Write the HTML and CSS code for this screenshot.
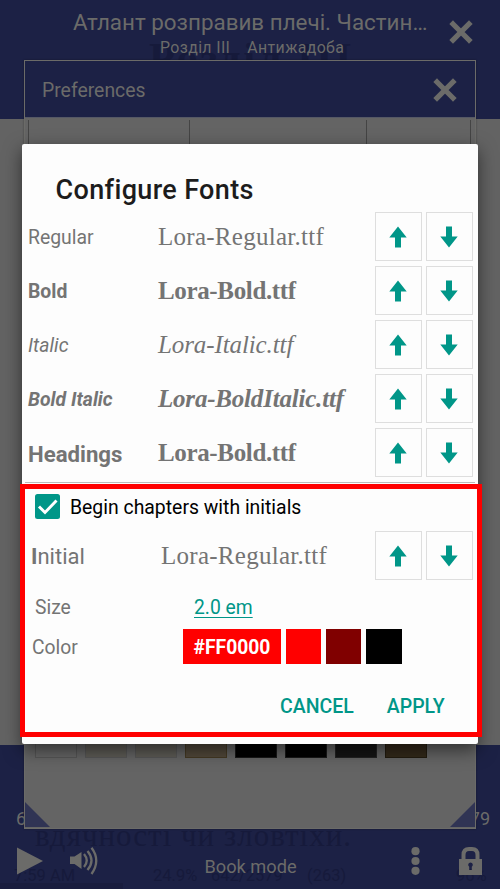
FILE: index.html
```html
<!DOCTYPE html>
<html lang="uk">
<head>
<meta charset="utf-8">
<title>Configure Fonts</title>
<link rel="stylesheet" href="styles.css">
</head>
<body>
<svg class="defs" width="0" height="0" aria-hidden="true">
  <symbol id="up" viewBox="0 0 18 22"><path d="M9 0.5 17.7 11.5H12V21.5H6V11.5H.3Z"/></symbol>
  <symbol id="down" viewBox="0 0 18 22"><path d="M9 21.5 17.7 10.5H12V.5H6V10.5H.3Z"/></symbol>
  <symbol id="close" viewBox="0 0 24 24"><path d="M4 4 20 20M20 4 4 20" fill="none" stroke="currentColor" stroke-width="5.2" stroke-linecap="square"/></symbol>
</svg>
<div class="screen">
  <header class="reader-bar">
    <div class="ghost ghost-title">Розділ III</div>
    <div class="titles">
      <div class="book"><span>Атлант розправив плечі. Частин…</span></div>
      <div class="chapter"><span>Розділ III</span><span>Антижадоба</span></div>
    </div>
    <svg class="close"><use href="#close"/></svg>
  </header>
  <main class="page"></main>
  <footer class="controls">
    <div class="progress"><span>6</span><span>79</span></div>
    <div class="ghost ghost-line">вдячності чи зловтіхи.</div>
    <div class="ghost ghost-status"><span>7:59 AM</span><span>24.9%</span><span>642/2579</span><span>(263)</span><span>96%</span></div>
    <div class="ghost-track"></div>
    <div class="toolbar">
      <svg class="play" viewBox="0 0 26 28"><path d="M0 .5 26 14 0 27.5Z"/></svg>
      <svg class="speaker" viewBox="0 0 28 28"><path d="M0 9.500H4.500L11.500 5V22L4.500 17H0Z"/><path d="M14 7Q19.500 13.500 14 20M17.500 4Q25.500 13.500 17.500 23M21.500 .800Q31 13.500 21.500 27" fill="none" stroke="currentColor" stroke-width="2.3"/></svg>
      <span class="mode">Book mode</span>
      <svg class="dots" viewBox="0 0 9 28"><circle cx="4.5" cy="4.2" r="4.1"/><circle cx="4.5" cy="14" r="4.1"/><circle cx="4.5" cy="23.8" r="4.1"/></svg>
      <svg class="lock" viewBox="0 0 23 28"><path d="M4.500 13V8Q4.500 2 10 2H13Q18.500 2 18.500 8V13" fill="none" stroke="currentColor" stroke-width="4"/><path fill-rule="evenodd" d="M0 12H23V28H0ZM11.500 15.500a2.300 2.300 0 0 0-1.300 4.200V23h2.600v-3.300a2.300 2.300 0 0 0-1.300-4.200Z"/></svg>
    </div>
  </footer>

  <section class="prefs">
    <div class="prefs-head"><span>Preferences</span><svg class="close"><use href="#close"/></svg></div>
    <div class="prefs-tabs"><i></i><i></i><i></i></div>
    <div class="themes"><i></i><i class="cream"></i><i class="cream"></i><i class="paper"></i><i class="black"></i><i class="black"></i><i class="dark"></i><i class="brown"></i></div>
    <div class="corners"><i></i><i></i></div>
  </section>

  <section class="dialog">
    <h1><span>Configure Fonts</span></h1>
    <div class="row"><span class="label l-regular">Regular</span><span class="file f-regular">Lora-Regular.ttf</span><button><svg><use href="#up"/></svg></button><button><svg><use href="#down"/></svg></button></div>
    <div class="row"><span class="label l-bold">Bold</span><span class="file f-bold">Lora-Bold.ttf</span><button><svg><use href="#up"/></svg></button><button><svg><use href="#down"/></svg></button></div>
    <div class="row"><span class="label l-italic">Italic</span><span class="file f-italic">Lora-Italic.ttf</span><button><svg><use href="#up"/></svg></button><button><svg><use href="#down"/></svg></button></div>
    <div class="row"><span class="label l-bolditalic">Bold Italic</span><span class="file f-bolditalic">Lora-BoldItalic.ttf</span><button><svg><use href="#up"/></svg></button><button><svg><use href="#down"/></svg></button></div>
    <div class="row"><span class="label l-headings">Headings</span><span class="file f-bold">Lora-Bold.ttf</span><button><svg><use href="#up"/></svg></button><button><svg><use href="#down"/></svg></button></div>
    <div class="initials">
      <div class="check"><svg viewBox="0 0 25 25"><rect width="25" height="25" rx="2.500"/><path d="M4 12.500 10 18.500 21.500 6.500" fill="none" stroke="#fff" stroke-width="2.900"/></svg><span>Begin chapters with initials</span></div>
      <div class="row initial"><span class="label l-initial"><b>I</b>nitial</span><span class="file f-regular">Lora-Regular.ttf</span><button><svg><use href="#up"/></svg></button><button><svg><use href="#down"/></svg></button></div>
      <div class="size"><span>Size</span><a>2.0 em</a></div>
      <div class="color"><span>Color</span><div class="swatches"><b>#FF0000</b><i></i><i class="maroon"></i><i class="black"></i></div></div>
      <div class="actions"><span class="cancel">CANCEL</span><span class="apply">APPLY</span></div>
    </div>
  </section>
  <div class="highlight"></div>
</div>
</body>
</html>
```
FILE: styles.css
```css
* { box-sizing: border-box; }
body { margin: 0; font-family: Roboto, sans-serif; }
.defs { position: absolute; }
svg { display: block; fill: currentColor; }
.screen { position: relative; width: 500px; height: 889px; overflow: hidden; display: grid; grid-template-rows: 119px 1fr 144px; color: #6b6b69; white-space: nowrap; }
.reader-bar { position: relative; background: #1c2145; display: flex; padding: 9px 27px 0 73px; justify-content: space-between; align-items: flex-start; }
.titles { position: relative; width: 356px; }
.book { font-size: 22.4px; line-height: 26px; }
.chapter { display: flex; gap: 17px; margin: 3px 0 0 87px; font-size: 15.9px; line-height: 20px; letter-spacing: .37px; }
.close { width: 24px; height: 24px; }
.reader-bar .close { margin-top: 11px; }
.page { background: #636363; }
.ghost { color: #161a3b; position: absolute; }
.ghost-title { left: 149px; top: 38px; font: bold 43px/40px "Liberation Serif", serif; letter-spacing: 2.3px; }
.controls { position: relative; background: #1c2145; padding-top: 64px; overflow: hidden; }
.progress { display: flex; justify-content: space-between; padding: 0 10px 0 16px; font-size: 18px; line-height: 20px; }
.ghost-line { left: 35px; top: 73px; font: 31px/36px "Liberation Serif", serif; letter-spacing: 1px; }
.ghost-status { left: 14px; top: 121px; display: flex; font-size: 16.500px; line-height: 20px; }
.ghost-status span:nth-child(1) { width: 139px; }
.ghost-status span:nth-child(2) { width: 58px; }
.ghost-status span:nth-child(3) { width: 96px; }
.ghost-status span:nth-child(4) { width: 149px; }
.ghost-track { position: absolute; left: 0; bottom: 0; width: 123px; height: 6px; background: #191d3e; }
.toolbar { position: relative; display: flex; align-items: center; height: 28px; margin: 18px 18px 0 17px; }
.play { width: 26px; height: 28px; }
.speaker { width: 28px; height: 28px; margin-left: 27px; }
.mode { width: 94px; margin: 11px 0 0 106.500px; font-size: 18.200px; }
.dots { width: 9px; height: 28px; margin-left: 112.500px; }
.lock { width: 23px; height: 28px; margin-left: auto; }
.prefs { position: absolute; left: 24px; top: 60px; width: 452px; height: 769px; border: 1px solid #6b6b68; background: #646464; display: flex; flex-direction: column; box-shadow: 0 0 2px #0005; }
.prefs-head { height: 57px; background: #1c2145; display: flex; align-items: center; justify-content: space-between; padding: 1px 18px 0 17px; border-bottom: 1px solid #555865; font-size: 19.400px; }
.prefs-head span { margin-top: 1px; }
.prefs-tabs { height: 620px; padding: 2px 4px 0 3px; display: grid; grid-template-columns: 161px 177px 1fr; }
.prefs-tabs i { border-left: 1px solid #444; }
.prefs-tabs i:last-child { border-right: 1px solid #444; }
.themes { display: flex; gap: 8px; padding-left: 10px; height: 20px; }
.themes i { width: 42px; border: 1px solid #555; background: #656565; }
.themes .cream { background: #5d5b55; }
.themes .paper { background: #51483a; border-color: #443923; }
.themes .black { background: #000; border-color: #181818; }
.themes .dark { background: #141414; border-color: #222; }
.themes .brown { background: #33291a; border-color: #221b0f; }
.corners { flex: 1; display: flex; justify-content: space-between; align-items: flex-end; padding-bottom: 1px; }
.corners i { width: 25px; height: 25px; background: #303454; clip-path: polygon(0 0, 100% 100%, 0 100%); }
.corners i:last-child { clip-path: polygon(100% 0, 100% 100%, 0 100%); }
.dialog { position: absolute; left: 22px; top: 144px; width: 456px; height: 600px; border-radius: 2px; background: #fdfdfd; color: #747474; box-shadow: 0 6px 18px #0008; display: flex; flex-direction: column; padding-top: 29px; }
h1 { margin: 0 0 7px 33.500px; font-size: 27px; line-height: 34px; height: 32px; font-weight: 500; color: #1c1c1c; letter-spacing: .35px; }
.row { height: 49px; margin-bottom: 5px; padding-left: 6px; display: grid; grid-template-columns: 130px 217px 46px 46px; column-gap: 0; align-items: center; }
.row button:last-child { margin-left: 5px; }
button { width: 46.500px; height: 49px; padding: 0; border: 1px solid #dedede; background: #fdfdfd; display: grid; place-items: center; color: #009688; }
button svg { width: 18px; height: 22px; }
.label { font-size: 19.400px; line-height: 24px; margin-top: 3px; }
.file { font-family: "Liberation Serif", serif; font-size: 25px; line-height: 28px; }
.f-regular { letter-spacing: .27px; }
.f-bold { letter-spacing: -.35px; }
.f-italic { letter-spacing: -.1px; }
.f-bolditalic { letter-spacing: -.2px; }
.l-bold, .l-bolditalic, .l-headings, .f-bold, .f-bolditalic { font-weight: 700; }
.l-italic, .l-bolditalic, .f-italic, .f-bolditalic { font-style: italic; }
.l-headings { font-size: 22.200px; }
.l-initial { font-size: 22px; }
.initials { border-top: 1px solid #bbb; margin: 0 3px; }
.check { height: 45px; margin: 1px 0 2px; padding-left: 10px; display: flex; align-items: center; gap: 10px; color: #000; font-size: 19.400px; }
.check svg { width: 25px; height: 25px; fill: #009688; }
.check span { margin-top: 2px; }
.initial { margin-left: -3px; padding-left: 9px; grid-template-columns: 130px 214px 46px 46px; }
.size { display: flex; height: 34px; margin-top: 10px; padding-left: 10px; align-items: center; font-size: 19.300px; }
.size span { width: 159px; }
.size a { color: #009688; text-decoration: underline; text-underline-offset: 3px; text-decoration-thickness: 1px; }
.color { display: flex; height: 35px; margin-top: 5px; padding-left: 7px; align-items: center; font-size: 19.300px; }
.color > span { width: 151px; padding-top: 2px; }
.swatches { display: flex; gap: 5px; height: 35px; }
.swatches b { width: 98px; padding-top: 2px; background: red; color: #fff; display: grid; place-items: center; }
.swatches i { width: 35.200px; background: red; }
.swatches .maroon { background: #800000; }
.swatches .black { background: #000; }
.actions { display: flex; margin-top: 31px; padding-left: 255px; gap: 33px; color: #009688; font-size: 19.500px; line-height: 24px; font-weight: 500; }
.highlight { position: absolute; left: 20px; top: 484px; width: 462px; height: 253px; border: 5px solid red; }
```
